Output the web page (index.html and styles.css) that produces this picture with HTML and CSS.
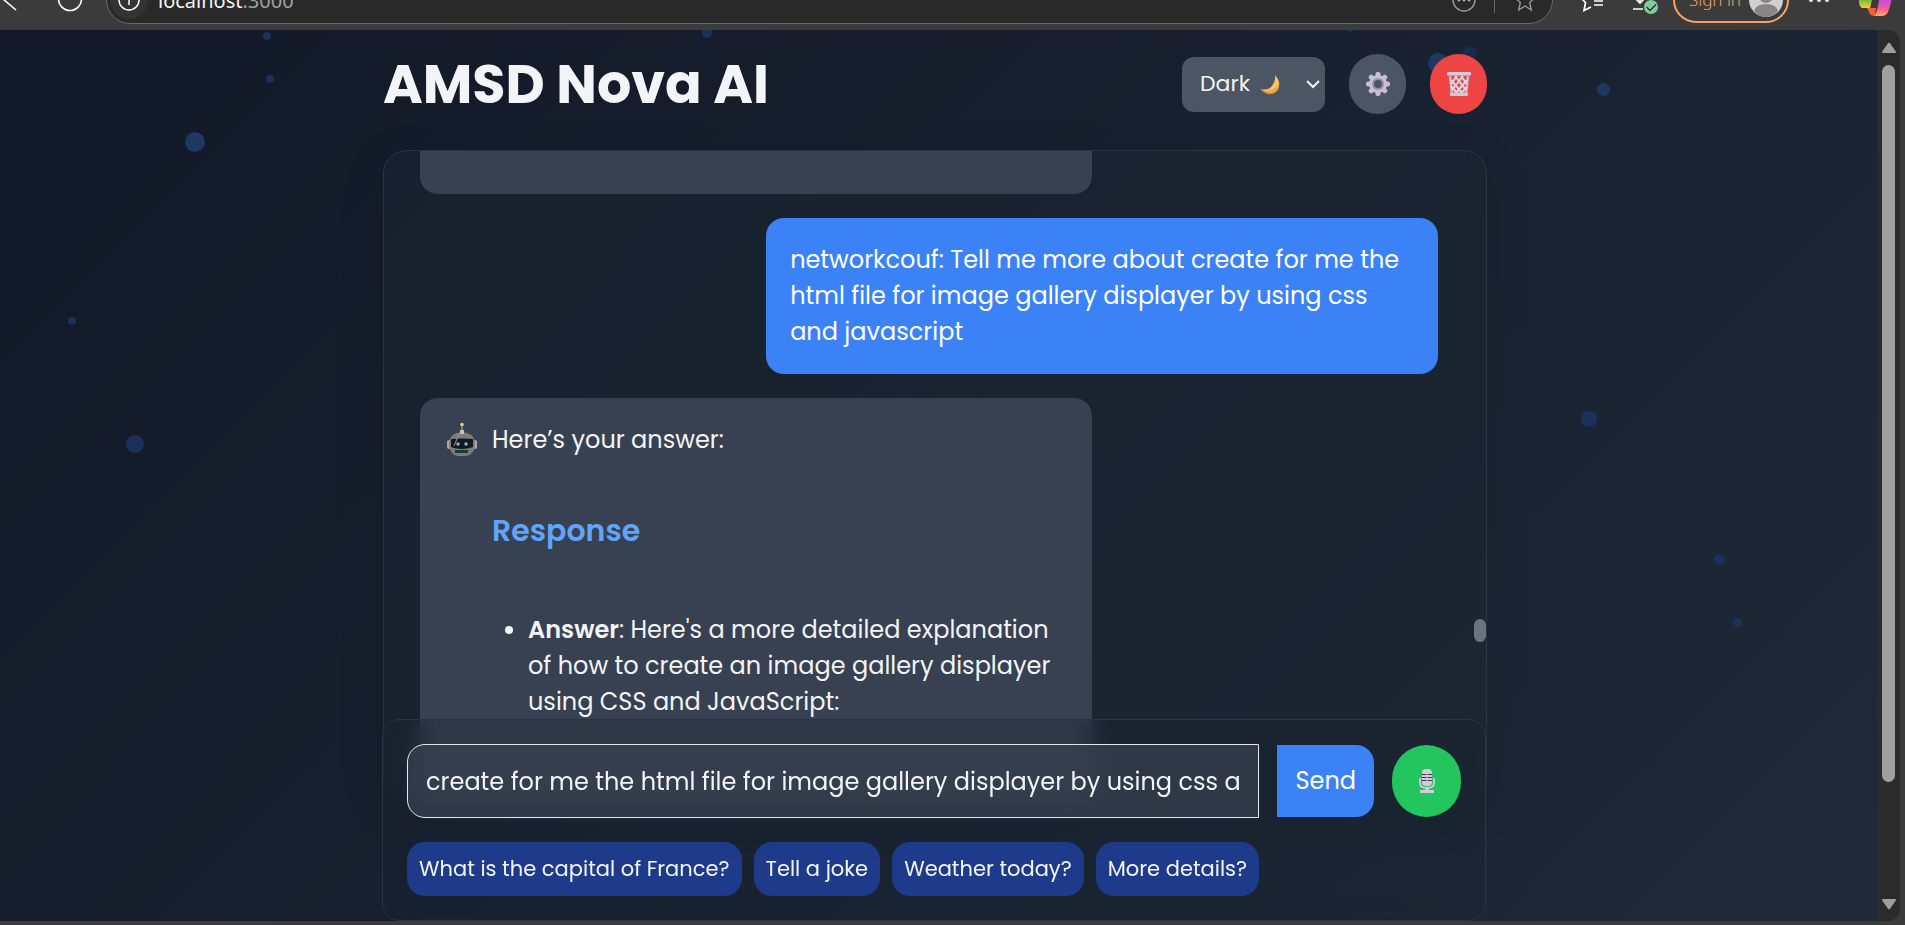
FILE: index.html
```html
<!DOCTYPE html>
<html lang="en">
<head>
<meta charset="utf-8">
<title>AMSD Nova AI</title>
<link rel="stylesheet" href="styles.css">
</head>
<body>
<div class="browser">
  <div class="toolbar">
    <button class="tool back" aria-label="Back"><svg width="17" height="24" viewBox="0 0 17 24"><path d="M16 23 L3 12 L16 1" fill="none" stroke="#fff" stroke-width="1.6"/></svg></button>
    <button class="tool reload" aria-label="Reload"><svg width="26" height="26" viewBox="0 0 26 26"><circle cx="13" cy="13" r="11.5" fill="none" stroke="#fff" stroke-width="1.6"/></svg></button>
    <div class="address">
      <span class="info"><svg width="24" height="24" viewBox="0 0 24 24"><circle cx="12" cy="12" r="10" fill="none" stroke="#fff" stroke-width="1.5"/><path d="M12 10v7" stroke="#fff" stroke-width="1.5"/></svg></span>
      <span class="url">localhost<span class="port">:3000</span></span>
      <div class="address-tools">
        <svg width="24" height="24" viewBox="0 0 24 24"><circle cx="12" cy="12" r="11" fill="none" stroke="#999" stroke-width="1.4"/><g fill="#bbb"><circle cx="7" cy="12" r="1.4"/><circle cx="12" cy="12" r="1.4"/><circle cx="17" cy="12" r="1.4"/></g></svg>
        <span class="divider"></span>
        <svg width="24" height="24" viewBox="0 0 24 24"><path d="M12 2l3 7 7 .6-5.300 5 1.600 7.400-6.300-4-6.300 4 1.600-7.400L2 9.600 9 9z" fill="none" stroke="#999" stroke-width="1.4"/></svg>
      </div>
    </div>
    <div class="actions">
      <svg width="24" height="24" viewBox="0 0 24 24"><path d="M12 19l-7 3.500 1.500-8L2 10l6-1 3-6 M11 3l3 5h6 M15 13h9 M15 17h9" fill="none" stroke="#fff" stroke-width="1.7"/></svg>
      <svg width="28" height="30" viewBox="0 0 28 30"><path d="M9 2v16M3 12l6 6 6-6M2 24h10" fill="none" stroke="#fff" stroke-width="1.7"/><circle cx="20" cy="22" r="7" fill="#7fce9c"/><path d="M15.500 22l3.500 3.500 6-6" fill="none" stroke="#26392d" stroke-width="1.400"/></svg>
      <button class="signin">Sign in<svg width="34" height="34" viewBox="0 0 34 34"><circle cx="17" cy="17" r="17" fill="#d2d0ce"/><circle cx="17" cy="13" r="7" fill="#8a8583"/><path d="M5 28q2-7 12-7t12 7q-5 6-12 6T5 28" fill="#8a8583"/></svg></button>
      <svg width="22" height="24" viewBox="0 0 22 24"><g fill="#fff"><circle cx="3" cy="12" r="2"/><circle cx="11" cy="12" r="2"/><circle cx="19" cy="12" r="2"/></g></svg>
      <svg width="34" height="34" viewBox="0 0 34 34"><defs><linearGradient id="cp" x1="0" y1="0" x2="0" y2="1"><stop offset=".4" stop-color="#c64fd8"/><stop offset=".75" stop-color="#ff5f8a"/><stop offset="1" stop-color="#ffb057"/></linearGradient><linearGradient id="cg" x1="0" y1="0" x2="0" y2="1"><stop offset=".1" stop-color="#4bb04b"/><stop offset="1" stop-color="#ffd02e"/></linearGradient></defs><path d="M1 13h14l-3 12H4q-4-2-3-12" fill="url(#cg)"/><path d="M22 8h12q0 12-4 21-2 4-6 4h-8q4-3 6-25" fill="url(#cp)"/><path d="M9 25h9l-1 8q-5 0-6-4z" fill="#ff5a35"/></svg>
    </div>
  </div>

  <div class="viewport">
    <main class="page">
      <div class="particles" aria-hidden="true">
        <i style="left:263px;top:2px;width:8px;height:8px"></i>
        <i style="left:266px;top:45px;width:8px;height:8px"></i>
        <i class="strong" style="left:185px;top:102px;width:20px;height:20px"></i>
        <i style="left:68px;top:287px;width:8px;height:8px"></i>
        <i style="left:126px;top:405px;width:18px;height:18px"></i>
        <i style="left:702px;top:-2px;width:10px;height:10px"></i>
        <i style="left:1344px;top:-10px;width:12px;height:12px"></i>
        <i class="strong" style="left:1428px;top:23px;width:20px;height:20px"></i>
        <i class="faint" style="left:1462px;top:16px;width:15px;height:15px"></i>
        <i class="strong" style="left:1597px;top:53px;width:13px;height:13px"></i>
        <i style="left:1581px;top:381px;width:16px;height:16px"></i>
        <i style="left:1714px;top:524px;width:11px;height:11px"></i>
        <i style="left:1733px;top:588px;width:9px;height:9px"></i>
      </div>
      <div class="container">
        <header class="header">
          <h1>AMSD Nova AI</h1>
          <div class="controls">
            <div class="theme">
              <select aria-label="Theme"><option>Dark</option><option>Light</option></select>
              <svg class="moon" width="22" height="20" viewBox="0 0 22 20"><path d="M16 0q7 8 2 15T1 14q8 2 12-3t3-11" fill="#ffc457"/><path d="M1 14q7 3 13 0t6-8q2 9-5 12.500T1 14" fill="#f29a35" opacity=".6"/></svg>
              <svg class="chevron" width="14" height="10" viewBox="0 0 14 10"><path d="M1 2l6 6 6-6" fill="none" stroke="#f3f4f6" stroke-width="2"/></svg>
            </div>
            <button class="round settings" aria-label="Settings"><svg width="24" height="24" viewBox="0 0 24 24"><g fill="#c9bdd9"><circle cx="12" cy="12" r="9"/><rect x="9.500" y="0" width="5" height="24" rx="2"/><rect x="0" y="9.500" width="24" height="5" rx="2"/><g transform="rotate(45 12 12)"><rect x="9.500" y="0" width="5" height="24" rx="2"/><rect x="0" y="9.500" width="24" height="5" rx="2"/></g></g><circle cx="12" cy="12" r="6" fill="#9b8fa8"/><circle cx="12" cy="12" r="4" fill="#4b5563"/></svg></button>
            <button class="round clear" aria-label="Clear chat"><svg width="24" height="24" viewBox="0 0 24 24"><path d="M3 4l2 18M21 4l-2 18" stroke="#c3b9cf" stroke-width="2.500"/><path d="M4 8l12 14M8 4l11 14M14 4l6 8M4 14l7 8M20 8L8 22M16 4L5 18M10 4l-6 8M20 15l-7 7" stroke="#ddd8e6" stroke-width="2" fill="none"/><rect x="0" y="0" width="24" height="3.500" rx="1" fill="#d3ccdc"/><rect x="3" y="20.500" width="18" height="3.500" rx="1" fill="#cfc7d8"/></svg></button>
          </div>
        </header>

        <section class="chat">
          <div class="message bot previous"></div>
          <div class="message user">networkcouf: Tell me more about create for me the html file for image gallery displayer by using css and javascript</div>
          <div class="message bot answer">
            <svg class="robot" width="32" height="36" viewBox="0 0 32 36"><path d="M16 4v7" stroke="#aaa" stroke-width="1.200"/><circle cx="16" cy="2.500" r="1.800" fill="#f4d84a"/><rect x="1" y="18" width="4" height="9" rx="2" fill="#aaa"/><rect x="27" y="18" width="4" height="9" rx="2" fill="#aaa"/><path d="M3 22q0-11 13-12 13 1 13 12 0 6-4 10-2 2-9 2t-9-2q-4-4-4-10" fill="#7b7b7b"/><rect x="14" y="8" width="4" height="4" fill="#c2c2c2"/><path d="M5 17q11-1 22 0v8q-5 2-11 2T5 25z" fill="#15171a"/><circle cx="12" cy="22" r="1.700" fill="#6cc4ee"/><circle cx="20" cy="22" r="1.700" fill="#6cc4ee"/><path d="M9 28h13v3H9z" fill="#183d32"/><path d="M8 24l5-12" stroke="#999"/></svg>
            <div class="body">
              <p>Here’s your answer:</p>
              <h2>Response</h2>
              <ul><li><strong>Answer</strong>: Here's a more detailed explanation of how to create an image gallery displayer using CSS and JavaScript:</li></ul>
            </div>
          </div>
          <span class="thumb"></span>
        </section>

        <form class="composer">
          <div class="row">
            <input class="prompt" type="text" aria-label="Message" value="create for me the html file for image gallery displayer by using css a">
            <button class="send" type="button">Send</button>
            <button class="mic" type="button" aria-label="Voice input"><svg width="16" height="24" viewBox="0 0 16 24"><path d="M1 9v5q0 5 7 5t7-5V9" fill="none" stroke="#cfc7d8" stroke-width="1.800"/><rect x="3" y="0" width="10" height="17" rx="4" fill="#d3cbdb"/><path d="M3 5.500h10M3 8.500h10M3 11.500h10" stroke="#41384c" stroke-width="1.200"/><path d="M8 4v9" stroke="#d3cbdb"/><path d="M6 18h4v3h5v3H1v-3h5z" fill="#d3cbdb"/></svg></button>
          </div>
          <div class="chips">
            <button type="button">What is the capital of France?</button>
            <button type="button">Tell a joke</button>
            <button type="button">Weather today?</button>
            <button type="button">More details?</button>
          </div>
        </form>
      </div>
    </main>
    <div class="scrollbar">
      <svg width="16" height="12" viewBox="0 0 16 12"><path d="M8 1.500L14 10H2z" fill="#9f9f9f" stroke="#9f9f9f" stroke-width="2" stroke-linejoin="round"/></svg>
      <span class="bar"></span>
      <svg width="16" height="12" viewBox="0 0 16 12"><path d="M8 10.500L14 2H2z" fill="#9f9f9f" stroke="#9f9f9f" stroke-width="2" stroke-linejoin="round"/></svg>
    </div>
  </div>
</div>
</body>
</html>
```
FILE: styles.css
```css
* { box-sizing: border-box; }
body {
  margin: 0;
  background: #3b3b3b;
  color: #f3f4f6;
  font-family: Poppins, Inter, sans-serif;
  font-size: 24px;
  line-height: 36px;
}
button, input, select { font: inherit; color: inherit; border: 0; margin: 0; }
svg { display: block; flex: none; }

.browser { display: flex; flex-direction: column; height: 100vh; overflow: hidden; padding-bottom: 4px; }
.toolbar {
  flex: none;
  display: flex;
  align-items: flex-end;
  height: 30px;
  overflow: hidden;
  padding-bottom: 6px;
  font-family: "Noto Sans", sans-serif;
  font-size: 20px;
  line-height: 28px;
}
.tool { background: none; padding: 0; }
.back { margin: 0 40px 13px 0; }
.reload { margin: 0 23px 12px 0; }
.address {
  flex: 1;
  display: flex;
  align-items: center;
  height: 48px;
  border: 1px solid #6a6a6a;
  border-radius: 24px;
  background: #292929;
}
.info { display: grid; place-items: center; width: 38px; height: 38px; margin-left: 3px; border-radius: 50%; background: #333; }
.url { margin-left: 10px; padding-top: 2px; }
.port { color: #a0a0a0; }
.address-tools { display: flex; align-items: center; gap: 18px; margin-left: auto; padding-right: 15px; }
.divider { width: 1px; height: 26px; background: #666; }
.actions { display: flex; align-items: center; height: 48px; margin-left: 26px; gap: 28px; padding-right: 13px; }
.signin {
  display: flex;
  align-items: center;
  gap: 8px;
  height: 46px;
  margin: 0 -9px 0 -14px;
  padding: 0 4px 0 14px;
  border: 2px solid #f5a066;
  border-radius: 23px;
  background: none;
  color: #f5a066;
  font-size: 17px;
  font-weight: 300;
}

.viewport { flex: 1; min-height: 0; display: flex; }
.page {
  position: relative;
  flex: 1;
  overflow: hidden;
  padding-right: 7px;
  background: linear-gradient(135deg, #111827, #1f2937);
}
.particles i { position: absolute; border-radius: 50%; background: #1b315c; }
.particles .strong { background: #1e3763; }
.particles .faint { background: #1b2a49; }
.container { position: relative; display: flex; flex-direction: column; max-width: 1104px; height: 100%; margin: 0 auto; }

.header { display: flex; align-items: center; justify-content: space-between; padding: 24px 0 36px; }
h1 { margin: 0; font-size: 54px; line-height: 60px; font-weight: 700; }
.controls { display: flex; align-items: center; gap: 24px; }
.theme { position: relative; }
.theme select { appearance: none; display: block; width: 143px; height: 55px; padding: 0 18px; border-radius: 12px; background: #4b5563; font-size: 22px; }
.moon { position: absolute; left: 77px; top: 18px; pointer-events: none; }
.chevron { position: absolute; right: 5px; top: 22px; pointer-events: none; }
.round { display: grid; place-items: center; width: 57px; height: 60px; padding: 0; border-radius: 30px; }
.settings { background: #4b5563; }
.clear { background: #ef4444; }

.chat {
  position: relative;
  flex: none;
  height: 651px;
  display: flex;
  flex-direction: column;
  gap: 24px;
  overflow: hidden;
  padding: 0 48px 0 36px;
  border: 1px solid #2a3442;
  border-radius: 24px;
  background: #1c253280;
  box-shadow: 0 12px 48px #0000001a;
}
.message { flex: none; width: 66%; padding: 24px; border-radius: 18px; }
.bot { display: flex; gap: 12px; background: #374151; }
.user { align-self: flex-end; background: #3b82f6; color: #fff; }
.previous { height: 43px; padding: 0; border-radius: 0 0 18px 18px; }
.answer { min-height: 420px; }
.robot { margin: 0 2px; }
.body { flex: 1; }
.body p { margin: 0; }
.body h2 { margin: 50px 0 58px; color: #60a5fa; font-size: 30px; line-height: 46px; font-weight: 600; }
.body ul { margin: 0; padding-left: 36px; }
.body strong { font-weight: 600; }
.thumb { position: absolute; right: 0; top: 468px; width: 12px; height: 23px; border-radius: 6px; background: #6b7280; }

.composer {
  position: relative;
  flex: none;
  margin: -82px 1px 0 -1px;
  padding: 24px;
  border: 1px solid #2a3442;
  border-radius: 18px;
  background: #1b24324d;
  backdrop-filter: blur(12px);
}
.row { display: flex; align-items: center; gap: 18px; }
.prompt {
  flex: 1;
  min-width: 0;
  height: 74px;
  padding: 0 18px;
  border: 1px solid #e5e7eb;
  border-radius: 18px 0 0 18px;
  background: #374151b3;
}
.send { height: 72px; padding: 0 18px; border-radius: 0 18px 18px 0; background: #3b82f6; color: #fff; }
.mic { display: grid; place-items: center; width: 69px; height: 72px; padding: 0; border-radius: 36px; background: #22c55e; }
.chips { display: flex; gap: 12px; margin-top: 24px; }
.chips button { height: 54px; padding: 0 12px; border-radius: 18px; background: #1e3a8a; font-size: 21px; white-space: nowrap; }

.scrollbar {
  flex: none;
  display: flex;
  flex-direction: column;
  align-items: center;
  width: 23px;
  margin-right: 5px;
  padding: 12px 0 11px;
  border-radius: 0 12px 12px 0;
  background: #2b2b2b;
}
.bar { width: 13px; flex: 1; margin: 11px 0 116px; border-radius: 7px; background: #9f9f9f; }
```
